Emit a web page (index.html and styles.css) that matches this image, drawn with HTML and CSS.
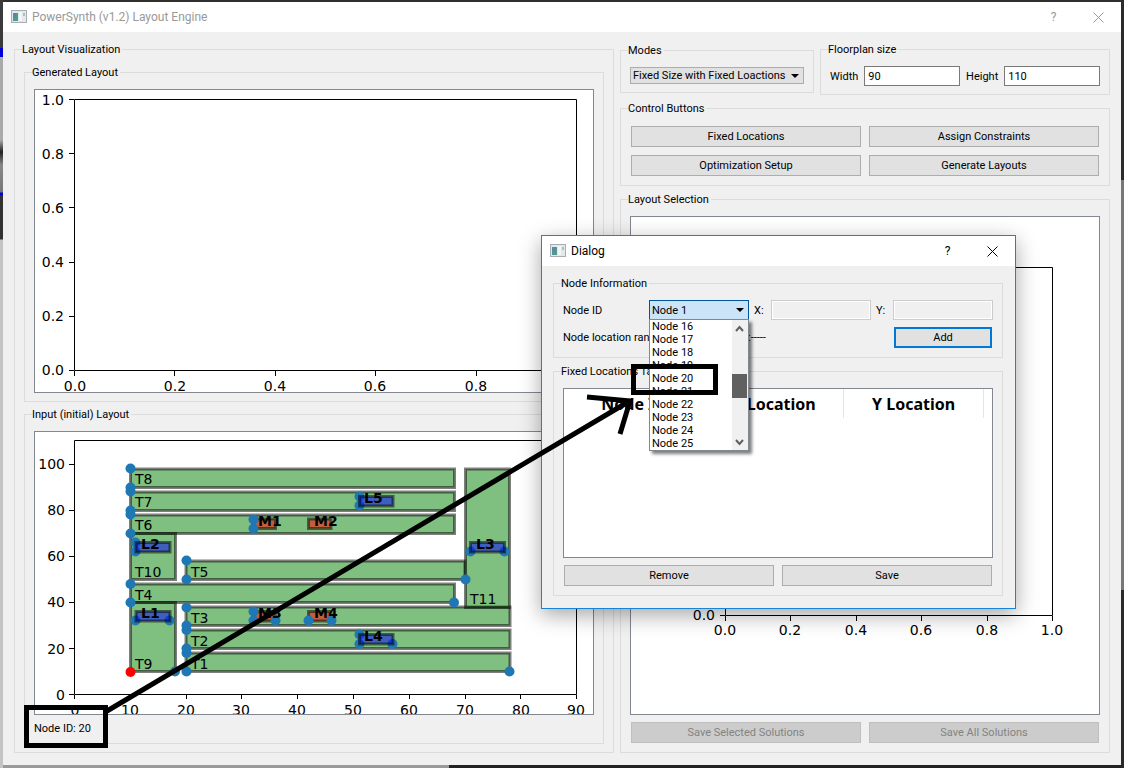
FILE: index.html
```html
<!DOCTYPE html>
<html lang="en">
<head>
<meta charset="utf-8">
<title>PowerSynth (v1.2) Layout Engine</title>
<link rel="stylesheet" href="styles.css">
</head>
<body>
<main class="window">
  <header class="titlebar titlebar-inactive">
    <svg class="app-icon" width="16" height="14" viewBox="0 0 16 14" aria-hidden="true"><rect x=".5" y=".5" width="15" height="12" fill="#e4e8ec" stroke="#a8adb4"/><rect x="2" y="3" width="5" height="8" fill="#4f9a8e"/><rect x="2" y="3" width="3" height="4" fill="#5a86a8"/><rect x="8" y="2" width="3" height="9" fill="#f4f4f4"/><rect x="12" y="3" width="2" height="3" fill="#9cc8bc"/></svg>
    <h1 class="title">PowerSynth (v1.2) Layout Engine</h1>
    <button class="caption-button" type="button" aria-label="Help">?</button>
    <button class="caption-button" type="button" aria-label="Close"><svg width="11" height="11" viewBox="0 0 11 11"><path d="M.5 .5l10 10M10.500 .5l-10 10" fill="none" stroke="currentColor"/></svg></button>
  </header>
  <div class="columns">
    <fieldset class="group visualization">
      <legend>Layout Visualization</legend>
      <fieldset class="group plot-group">
        <legend>Generated Layout</legend>
        <div class="canvas">
          <svg class="plot" viewBox="35 90 558 302">
            <path class="axis" d="M74.500 99.500H576.500V370.500H74.500ZM69 99.500h5M69 153.500h5M69 207.500h5M69 262.500h5M69 316.500h5M69 370.500h5M74.500 371v5M174.500 371v5M275.500 371v5M375.500 371v5M476.500 371v5M576.500 371v5"/>
            <g class="tick-y"><text x="64" y="105">1.0</text><text x="64" y="159">0.8</text><text x="64" y="213">0.6</text><text x="64" y="267">0.4</text><text x="64" y="321">0.2</text><text x="64" y="375">0.0</text></g>
            <g class="tick-x"><text x="75" y="391">0.0</text><text x="175" y="391">0.2</text><text x="275" y="391">0.4</text><text x="375" y="391">0.6</text><text x="476" y="391">0.8</text><text x="576" y="391">1.0</text></g>
          </svg>
        </div>
      </fieldset>
      <fieldset class="group plot-group">
        <legend>Input (initial) Layout</legend>
        <div class="canvas">
          <svg class="plot" viewBox="35 432 558 282">
            <g class="trace">
              <rect x="186" y="653" width="324" height="18.500"/><rect x="186" y="630" width="324" height="18.500"/><rect x="186" y="607" width="324" height="18.500"/>
              <rect x="130.500" y="584" width="324" height="18.500"/><rect x="186" y="561" width="279" height="18.500"/><rect x="130.500" y="515" width="324" height="18.500"/>
              <rect x="130.500" y="492" width="324" height="18.500"/><rect x="130.500" y="469" width="324" height="18.500"/>
              <rect x="130.500" y="602.500" width="45" height="69"/><rect x="130.500" y="533.500" width="45" height="46"/><rect x="465.500" y="469" width="44" height="138.500"/>
            </g>
            <g class="mosfet"><rect x="253" y="519" width="22.500" height="9.500"/><rect x="308.500" y="519" width="22.500" height="9.500"/><rect x="253" y="611.500" width="22.500" height="9.500"/><rect x="308.500" y="611.500" width="22.500" height="9.500"/></g>
            <g class="node">
              <circle cx="130.500" cy="468.500" r="5"/><circle cx="130.500" cy="487.500" r="5"/><circle cx="130.500" cy="491.500" r="5"/><circle cx="130.500" cy="510.500" r="5"/><circle cx="130.500" cy="514.500" r="5"/><circle cx="130.500" cy="533.500" r="5"/><circle cx="130.500" cy="584" r="5"/><circle cx="130.500" cy="602.500" r="5"/>
              <circle cx="175" cy="671.500" r="5"/><circle cx="186.500" cy="671.500" r="5"/><circle cx="186.500" cy="653" r="5"/><circle cx="186.500" cy="648.500" r="5"/><circle cx="186.500" cy="630" r="5"/><circle cx="186.500" cy="625.500" r="5"/><circle cx="186.500" cy="607.500" r="5"/><circle cx="186.500" cy="579.500" r="5"/><circle cx="186.500" cy="560.500" r="5"/>
              <circle cx="509.500" cy="671.500" r="5"/><circle cx="454" cy="602.500" r="5"/><circle cx="465.500" cy="579.500" r="5"/>
              <circle cx="135.500" cy="542.500" r="5"/><circle cx="135.500" cy="551.500" r="5"/><circle cx="135.500" cy="620.500" r="5"/><circle cx="169.500" cy="620.500" r="5"/><circle cx="470.500" cy="551.500" r="5"/><circle cx="504.500" cy="551.500" r="5"/>
              <circle cx="359.500" cy="634.500" r="5"/><circle cx="359.500" cy="644" r="5"/><circle cx="392.500" cy="644" r="5"/><circle cx="359.500" cy="496.500" r="5"/><circle cx="359.500" cy="505.500" r="5"/>
              <circle cx="253.500" cy="519.500" r="5"/><circle cx="253.500" cy="528.500" r="5"/><circle cx="253.500" cy="611.500" r="5"/><circle cx="253.500" cy="620.500" r="5"/><circle cx="275.500" cy="620.500" r="5"/><circle cx="308.500" cy="620.500" r="5"/><circle cx="331.500" cy="620.500" r="5"/>
              <circle class="node-picked" cx="130.500" cy="672" r="5"/>
            </g>
            <g class="lead"><rect x="136" y="542.500" width="34" height="9.500"/><rect x="136" y="611.500" width="34" height="9.500"/><rect x="470.500" y="542.500" width="34" height="9.500"/><rect x="359.500" y="634.500" width="33.500" height="9.500"/><rect x="359.500" y="496.500" width="33.500" height="9.500"/></g>
            <g class="name"><text x="135" y="484">T8</text><text x="135" y="507">T7</text><text x="135" y="530">T6</text><text x="135" y="577">T10</text><text x="191" y="577">T5</text><text x="135" y="600">T4</text><text x="191" y="623">T3</text><text x="191" y="646">T2</text><text x="191" y="669">T1</text><text x="135" y="669">T9</text><text x="470" y="604">T11</text></g>
            <g class="name name-bold"><text x="141" y="549">L2</text><text x="141" y="618">L1</text><text x="476" y="549">L3</text><text x="364" y="641">L4</text><text x="364" y="503">L5</text><text x="258" y="526">M1</text><text x="314" y="526">M2</text><text x="258" y="618">M3</text><text x="314" y="618">M4</text></g>
            <path class="axis" d="M74.500 440.500H576.500V694.500H74.500ZM69 464.500h5M69 510.500h5M69 556.500h5M69 602.500h5M69 648.500h5M69 694.500h5M74.500 695v4M130.500 695v4M186.500 695v4M241.500 695v4M297.500 695v4M353.500 695v4M409.500 695v4M465.500 695v4M520.500 695v4M576.500 695v4"/>
            <g class="tick-y"><text x="65" y="469">100</text><text x="65" y="515">80</text><text x="65" y="561">60</text><text x="65" y="607">40</text><text x="65" y="654">20</text><text x="65" y="700">0</text></g>
            <g class="tick-x"><text x="75" y="715">0</text><text x="130" y="715">10</text><text x="186" y="715">20</text><text x="241" y="715">30</text><text x="297" y="715">40</text><text x="353" y="715">50</text><text x="409" y="715">60</text><text x="465" y="715">70</text><text x="521" y="715">80</text><text x="576" y="715">90</text></g>
          </svg>
        </div>
        <p class="status">Node ID: 20</p>
      </fieldset>
    </fieldset>

    <div class="sidebar">
      <div class="settings">
        <fieldset class="group modes">
          <legend>Modes</legend>
          <span class="combo"><select class="combo-select" aria-label="Mode"><option>Fixed Size with Fixed Loactions</option></select></span>
        </fieldset>
        <fieldset class="group">
          <legend>Floorplan size</legend>
          <div class="size-row">
            <label for="width">Width</label><input class="field" id="width" type="text" value="90">
            <label for="height">Height</label><input class="field" id="height" type="text" value="110">
          </div>
        </fieldset>
      </div>
      <fieldset class="group">
        <legend>Control Buttons</legend>
        <div class="button-grid control-grid">
          <button class="button" type="button">Fixed Locations</button>
          <button class="button" type="button">Assign Constraints</button>
          <button class="button" type="button">Optimization Setup</button>
          <button class="button" type="button">Generate Layouts</button>
        </div>
      </fieldset>
      <fieldset class="group">
        <legend>Layout Selection</legend>
        <div class="canvas">
          <svg class="plot" viewBox="631 217 468 497">
            <path class="axis" d="M725.500 267.500H1052.500V615.500H725.500ZM720 615.500h5M725.500 616v5M790.500 616v5M856.500 616v5M921.500 616v5M987.500 616v5M1052.500 616v5"/>
            <g class="tick-y"><text x="715" y="620">0.0</text></g>
            <g class="tick-x"><text x="725" y="635">0.0</text><text x="790" y="635">0.2</text><text x="856" y="635">0.4</text><text x="921" y="635">0.6</text><text x="987" y="635">0.8</text><text x="1052" y="635">1.0</text></g>
          </svg>
        </div>
        <div class="button-grid">
          <button class="button" type="button" disabled>Save Selected Solutions</button>
          <button class="button" type="button" disabled>Save All Solutions</button>
        </div>
      </fieldset>
    </div>
  </div>
</main>

<section class="dialog" role="dialog" aria-labelledby="dialog-title">
  <header class="titlebar">
    <svg class="app-icon" width="16" height="14" viewBox="0 0 16 14" aria-hidden="true"><rect x=".5" y=".5" width="15" height="12" fill="#e4e8ec" stroke="#a8adb4"/><rect x="2" y="3" width="5" height="8" fill="#4f9a8e"/><rect x="2" y="3" width="3" height="4" fill="#5a86a8"/><rect x="8" y="2" width="3" height="9" fill="#f4f4f4"/><rect x="12" y="3" width="2" height="3" fill="#9cc8bc"/></svg>
    <h2 class="title" id="dialog-title">Dialog</h2>
    <button class="caption-button" type="button" aria-label="Help">?</button>
    <button class="caption-button" type="button" aria-label="Close"><svg width="11" height="11" viewBox="0 0 11 11"><path d="M.5 .5l10 10M10.500 .5l-10 10" fill="none" stroke="currentColor"/></svg></button>
  </header>
  <div class="dialog-body">
    <fieldset class="group">
      <legend>Node Information</legend>
      <div class="node-row">
        <label for="node">Node ID</label>
        <span class="combo combo-open">
          <select class="combo-select" id="node"><option>Node 1</option></select>
          <span class="popup">
            <span class="popup-list" role="listbox" aria-label="Nodes">
              <span role="option">Node 16</span><span role="option">Node 17</span><span role="option">Node 18</span><span role="option">Node 19</span><span role="option">Node 20</span><span role="option">Node 21</span><span role="option">Node 22</span><span role="option">Node 23</span><span role="option">Node 24</span><span role="option">Node 25</span>
            </span>
            <svg class="scrollbar" width="16" height="130" viewBox="0 0 16 130" aria-hidden="true"><rect width="16" height="130" fill="#f0f0f0"/><rect y="54" width="15" height="24" fill="#606060"/><path d="M4 11l3.500-4 3.500 4M4 120l3.500 4 3.500-4" fill="none" stroke="#606060" stroke-width="2"/></svg>
          </span>
        </span>
        <label class="coord" for="x">X:</label><input class="field" id="x" type="text" disabled>
        <label class="coord" for="y">Y:</label><input class="field" id="y" type="text" disabled>
      </div>
      <div class="range-row">
        <span class="range-label">Node location range</span><span class="range-value">:-----</span>
        <button class="button button-default" type="button">Add</button>
      </div>
    </fieldset>
    <fieldset class="group">
      <legend>Fixed Locations Table</legend>
      <div class="canvas table-area">
        <table class="locations">
          <thead><tr><th>Node ID</th><th>X Location</th><th>Y Location</th></tr></thead>
        </table>
      </div>
      <div class="button-grid">
        <button class="button" type="button">Remove</button>
        <button class="button" type="button">Save</button>
      </div>
    </fieldset>
  </div>
</section>

<svg class="annotation" width="1124" height="768" viewBox="0 0 1124 768" aria-hidden="true">
  <path d="M26.500 707.500h79v38h-79ZM633.500 366.500h82v26h-82ZM107 711L628 402" />
  <path d="M587 397L630 401L620 434"/>
</svg>
</body>
</html>
```
FILE: styles.css
```css
* { box-sizing: border-box; }

body {
  margin: 0;
  min-height: 100vh;
  padding: 2px 3px 3px 3px;
  position: relative;
  color: #000;
  font: 11px/13px Roboto, sans-serif;
  background:
    linear-gradient(#2b2b2b 0 180px, #777 180px 590px, #262a2a 590px) right / 3px 100% no-repeat,
    linear-gradient(#3a3a3a 0 48px, #0000d8 48px 57px, #aaa 57px 140px, #222 152px, #888 165px, #777 192px, #0000d8 193px 195px, #333 196px 239px, #c4c4c4 240px) left / 3px 100% no-repeat,
    linear-gradient(90deg, #999 0 449px, #222 449px) bottom / 100% 3px no-repeat,
    #303030;
}

button, input, select { font: inherit; color: inherit; margin: 0; }

.window { background: #f0f0f0; padding-bottom: 12px; }

.titlebar {
  display: flex;
  align-items: center;
  height: 30px;
  padding-left: 8px;
  background: #fff;
  font: 12px/16px Roboto, sans-serif;
}
.titlebar-inactive { color: #999; }
.title { flex: 1; margin: 0 0 0 5px; font: inherit; }
.app-icon { flex: none; }
.caption-button {
  display: flex;
  align-items: center;
  justify-content: center;
  width: 45px;
  height: 30px;
  padding: 0;
  border: 0;
  background: none;
}

.columns {
  display: grid;
  grid-template-columns: 600fr 490fr;
  gap: 6px;
  padding: 11px 11px 0;
}

.group {
  min-width: 0;
  margin: 0;
  padding: 10px 9px 8px;
  border: 1px solid #dcdcdc;
}
.group > legend {
  margin-left: -2px;
  padding: 0 2px 0 0;
  line-height: 13px;
}
.plot-group + .plot-group { margin-top: 6px; }

.canvas { border: 1px solid #828790; background: #fff; }
.plot {
  display: block;
  width: 100%;
  height: auto;
  font: 14px "DejaVu Sans", sans-serif;
}
.axis { fill: none; stroke: #000; }
.tick-y { text-anchor: end; }
.tick-x { text-anchor: middle; }
.trace, .mosfet, .lead { fill-opacity: .5; stroke: #000; stroke-opacity: .5; stroke-width: 3; }
.trace { fill: #008000; }
.mosfet { fill: #f00; }
.lead { fill: #00f; }
.node { fill: #1f77b4; }
.node-picked { fill: #f00; }
.name-bold { font-weight: bold; }
.status { margin: 7px 0 0; }

.sidebar { display: flex; flex-direction: column; gap: 7px; }
.settings { display: grid; grid-template-columns: 194fr 290fr; gap: 6px; }
.modes { margin: 1px 0 2px; }

.combo { display: block; position: relative; }
.combo::after {
  content: "";
  position: absolute;
  right: 5px;
  top: 50%;
  margin-top: -2px;
  border: 4px solid transparent;
  border-top-color: #000;
  border-bottom: 0;
}
.combo-select {
  display: block;
  appearance: none;
  width: 100%;
  height: 17px;
  padding: 0 2px;
  border: 1px solid #adadad;
  border-radius: 0;
  background: #e1e1e1;
}
.combo-open .combo-select { height: 20px; border-color: #005499; background: #cce4f7; }

.size-row { display: flex; align-items: center; gap: 6px; }
.field {
  flex: 1;
  min-width: 0;
  width: 100%;
  height: 20px;
  padding: 0 3px;
  border: 1px solid #7a7a7a;
  background: #fff;
}
.field:disabled { border-color: #ccc; background: #f0f0f0; box-shadow: inset 0 0 0 1px #fff; }

.button-grid {
  display: grid;
  grid-template-columns: 1fr 1fr;
  gap: 8px;
  padding: 0 1px 1px;
}
.control-grid { padding-top: 1px; }
.canvas + .button-grid { margin-top: 7px; }
.button {
  height: 21px;
  padding: 0;
  border: 1px solid #adadad;
  background: #e1e1e1;
}
.button:disabled { border-color: #bfbfbf; background: #ccc; color: #838383; }
.button-default { border: 2px solid #0078d7; }

.dialog {
  position: absolute;
  left: 541px;
  top: 235px;
  width: 475px;
  border: 1px solid #1883d7;
  background: #f0f0f0;
  box-shadow: 0 6px 20px rgba(0, 0, 0, .35);
}
.dialog-body { display: grid; gap: 7px; padding: 11px 12px 12px 11px; }
.node-row {
  display: grid;
  grid-template-columns: 86px 1fr 22px 1fr 22px 1fr;
  align-items: center;
}
.coord { padding-left: 5px; }
.range-row { display: flex; align-items: center; padding: 7px 1px 1px 0; }
.range-label { width: 185px; }
.range-value { flex: 1; }
.button-default { width: 98px; }

.popup {
  position: absolute;
  z-index: 1;
  left: 0;
  top: 19px;
  display: flex;
  width: 100%;
  border: 1px solid #828790;
  background: #fff;
  box-shadow: 3px 3px 3px rgba(0, 0, 0, .5);
}
.popup-list { flex: 1; display: grid; padding-left: 2px; line-height: 13px; }
.scrollbar { display: block; flex: none; }

.table-area { min-height: 170px; }
.locations { border-collapse: collapse; table-layout: fixed; width: 420px; }
.locations th {
  height: 29px;
  padding: 0;
  border-right: 1px solid #e5e5e5;
  font: bold 16px/20px "Noto Sans", sans-serif;
}

.annotation {
  position: absolute;
  z-index: 2;
  left: 0;
  top: 0;
  pointer-events: none;
  fill: none;
  stroke: #000;
  stroke-width: 5;
}
```
